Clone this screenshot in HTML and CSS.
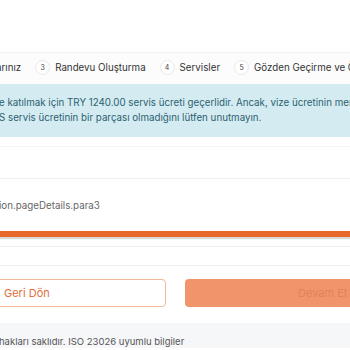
FILE: index.html
```html
<!DOCTYPE html>
<html lang="tr">

<head>
    <meta charset="UTF-8">
    <meta name="viewport" content="width=device-width, initial-scale=1.0">
    <title>Randevu</title>
    <link rel="stylesheet" href="styles.css">
</head>

<body>
    <div class="page">
        <div class="top-space"></div>

        <div class="stepper">
            <div class="step">
                <span class="step-label first">arınız</span>
            </div>
            <div class="step">
                <span class="step-badge">3</span>
                <span class="step-label">Randevu Oluşturma</span>
            </div>
            <div class="step">
                <span class="step-badge">4</span>
                <span class="step-label">Servisler</span>
            </div>
            <div class="step">
                <span class="step-badge">5</span>
                <span class="step-label">Gözden Geçirme ve Ödeme</span>
            </div>
        </div>

        <div class="alert-info">
            <p class="alert-line">e katılmak için TRY 1240.00 servis ücreti geçerlidir. Ancak, vize ücretinin merkezde ödenmesi gerekir.</p>
            <p class="alert-line">S servis ücretinin bir parçası olmadığını lütfen unutmayın.</p>
        </div>

        <div class="section section-empty"></div>

        <div class="section-text">
            <p class="para">ion.pageDetails.para3</p>
        </div>

        <div class="progress-bar"></div>

        <div class="section section-small"></div>
        <div class="section section-gap"></div>

        <div class="actions">
            <button class="btn-back">Geri Dön</button>
            <button class="btn-next" disabled>Devam Et</button>
        </div>

        <div class="footer">
            <span class="footer-text">hakları saklıdır. ISO 23026 uyumlu bilgiler</span>
        </div>
    </div>
</body>

</html>
```

FILE: styles.css
```css
body {
    font-family: Inter, "Noto Sans", sans-serif;
    margin: 0;
    padding: 0;
    background-color: #fff;
    color: #333;
}

.page {
    width: 350px;
    height: 350px;
    overflow: hidden;
}

.top-space {
    height: 52px;
}

/* stepper */
.stepper {
    display: flex;
    align-items: center;
    gap: 14px;
    height: 32px;
    padding-bottom: 3px;
    box-sizing: border-box;
    border-top: 1px solid #f1f1f1;
    background-color: #fcfcfc;
    white-space: nowrap;
}

.step {
    display: flex;
    align-items: center;
    gap: 5px;
}

.step-badge {
    width: 13px;
    height: 13px;
    border: 1px solid #e8e8e8;
    border-radius: 50%;
    background-color: #fff;
    font-size: 7px;
    color: #444;
    display: flex;
    align-items: center;
    justify-content: center;
}

.step-label {
    font-size: 9.75px;
    color: #333;
}

.first {
    margin-left: -4px;
}

/* info box */
.alert-info {
    background-color: #d3ebf1;
    color: #2c6270;
    padding: 11px 0 12px;
    white-space: nowrap;
}

.alert-line {
    margin: 0 0 0 -1px;
    font-size: 9.75px;
    line-height: 15px;
}

.section {
    border-bottom: 1px solid #f0f0f0;
}

.section-empty {
    height: 31px;
    border-top: 1px solid #f3f3f3;
    margin-top: 9px;
}

.section-text {
    height: 52px;
    display: flex;
    align-items: center;
}

.para {
    margin: 0 0 0 -1px;
    font-size: 9.75px;
    color: #666;
}

.progress-bar {
    height: 6px;
    background-color: #e8682b;
    box-shadow: 0 2px 1px rgba(0, 0, 0, 0.15);
}

.section-small {
    height: 9px;
}

.section-gap {
    height: 18px;
}

/* buttons */
.actions {
    display: flex;
    gap: 19px;
    margin-top: 13px;
    margin-left: -10px;
}

.actions button {
    flex: none;
    height: 28px;
    border-radius: 4px;
    font-family: Inter, "Noto Sans", sans-serif;
    font-size: 11px;
    text-align: left;
}

.btn-back {
    width: 176px;
    background-color: #fff;
    border: 1px solid #f2b89b;
    color: #e0703c;
    padding: 0 0 0 13px;
}

.btn-next {
    width: 220px;
    background-color: #f0956b;
    border: none;
    color: #e0835a;
    padding: 0 0 0 113px;
}

.footer {
    margin-top: 16px;
    height: 25px;
    background-color: #f6f7f9;
    display: flex;
    align-items: flex-end;
    padding-bottom: 1px;
    box-sizing: border-box;
    white-space: nowrap;
}

.footer-text {
    margin-left: -1px;
    font-size: 9.5px;
    color: #555;
}
```
